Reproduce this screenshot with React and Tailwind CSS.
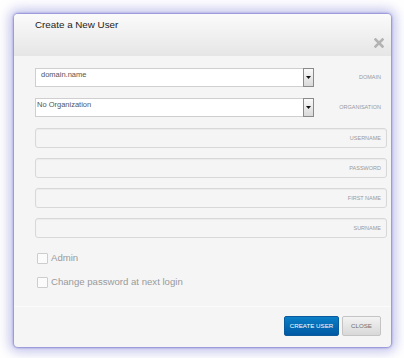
import React from "react";

function SelectBox({ value, indent }) {
  return (
    <div className="relative h-[19px] w-[279px] border border-[#cfcfcf] bg-white">
      <div className={`${indent} pt-[1px] text-[7.5px] leading-[10px] text-[#555]`}>{value}</div>
      <div className="absolute right-[-1px] top-[-1px] flex h-[19px] w-[11px] items-center justify-center border border-[#8a8a8a] bg-gradient-to-b from-[#fafafa] to-[#d9d9d9]">
        <svg width="5" height="3" viewBox="0 0 5 3">
          <polygon points="0,0 5,0 2.5,3" fill="#111" />
        </svg>
      </div>
    </div>
  );
}

function Field({ label }) {
  return (
    <div className="flex h-[20px] w-[352px] items-center justify-end rounded-[3px] border border-[#d8d8d8] bg-[#f5f5f5] pr-[5px] shadow-[inset_0_1px_1px_rgba(0,0,0,0.04)]">
      <span className="text-[5.5px] uppercase text-[#9a9a9a]">{label}</span>
    </div>
  );
}

function Check({ label }) {
  return (
    <div className="flex h-[12px] items-center gap-[3px] pl-[2px]">
      <div className="h-[11px] w-[11px] rounded-[1px] border border-[#cdcdcd] bg-[#fbfbfb]" />
      <span className="text-[9.6px] leading-[12px] text-[#9a9a9a]">{label}</span>
    </div>
  );
}

export default function App() {
  return (
    <div
      className="h-[358px] w-[404px] bg-white pl-[14px] pt-[14px]"
      style={{ fontFamily: '"Liberation Sans", Arial, sans-serif' }}
    >
      <div className="flex h-[333px] w-[377px] flex-col overflow-hidden rounded-[4px] bg-[#f5f5f5] shadow-[0_0_2px_1px_rgba(90,90,190,0.6),0_0_12px_5px_rgba(140,140,220,0.5)]">
        <div className="flex h-[42px] justify-between bg-gradient-to-b from-[#fbfbfb] to-[#e6e6e6] pl-[21px] pr-[7px]">
          <div className="pt-[5px] text-[9.8px] leading-[12px] text-[#222]">Create a New User</div>
          <div className="self-end pb-[8px]">
            <svg width="10" height="10" viewBox="0 0 10 10">
              <path d="M1.5 1.5 L8.5 8.5 M8.5 1.5 L1.5 8.5" stroke="#b3b3b3" strokeWidth="2.6" strokeLinecap="square" />
            </svg>
          </div>
        </div>

        <div className="flex flex-1 flex-col pl-[21px] pt-[12px]">
          <div className="flex items-center">
            <SelectBox value="domain.name" indent="pl-[5px]" />
            <div className="flex-1 pr-[10px] text-right text-[5.5px] text-[#9a9a9a]">DOMAIN</div>
          </div>
          <div className="mt-[11px] flex items-center">
            <SelectBox value="No Organization" indent="pl-[1px]" />
            <div className="flex-1 pr-[10px] text-right text-[5.5px] text-[#9a9a9a]">ORGANISATION</div>
          </div>
          <div className="mt-[11px] flex flex-col gap-[10px]">
            <Field label="Username" />
            <Field label="Password" />
            <Field label="First Name" />
            <Field label="Surname" />
          </div>
          <div className="mt-[14px] flex flex-col gap-[12px]">
            <Check label="Admin" />
            <Check label="Change password at next login" />
          </div>
        </div>

        <div className="flex h-[41px] justify-end gap-[3px] border-t border-[#fbfbfb] pr-[10px] pt-[9px]">
          <button className="h-[20px] w-[55px] rounded-[2px] border border-[#0a5a9c] bg-gradient-to-b from-[#0b7fc6] to-[#0058a3] text-[6.2px] text-white">
            CREATE USER
          </button>
          <button className="h-[20px] w-[39px] rounded-[2px] border border-[#c4c4c4] bg-gradient-to-b from-[#f3f3f3] to-[#d8d8d8] text-[6.2px] text-[#707070]">
            CLOSE
          </button>
        </div>
      </div>
    </div>
  );
}
